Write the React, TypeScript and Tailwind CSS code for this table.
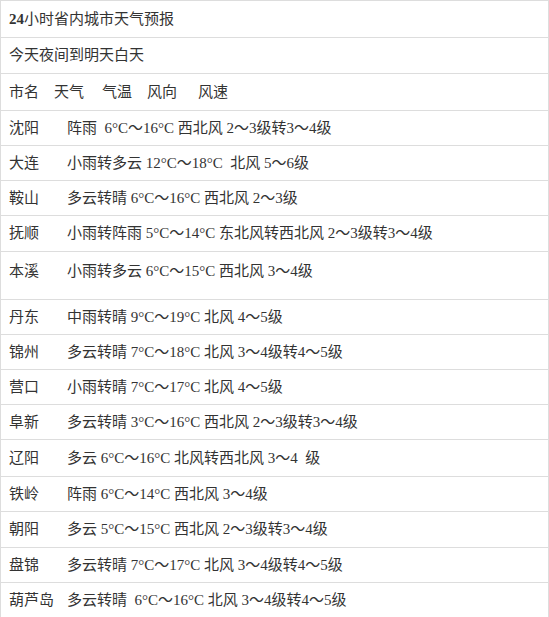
const rows: [string, string, string][] = [
  ['沈阳', '阵雨  6°C～16°C 西北风 2～3级转3～4级', 'h-[35px]'],
  ['大连', '小雨转多云 12°C～18°C  北风 5～6级', 'h-[35px]'],
  ['鞍山', '多云转晴 6°C～16°C 西北风 2～3级', 'h-[35px]'],
  ['抚顺', '小雨转阵雨 5°C～14°C 东北风转西北风 2～3级转3～4级', 'h-[36px]'],
  ['本溪', '小雨转多云 6°C～15°C 西北风 3～4级', 'h-[48px]'],
  ['丹东', '中雨转晴 9°C～19°C 北风 4～5级', 'h-[35px]'],
  ['锦州', '多云转晴 7°C～18°C 北风 3～4级转4～5级', 'h-[35px]'],
  ['营口', '小雨转晴 7°C～17°C 北风 4～5级', 'h-[35px]'],
  ['阜新', '多云转晴 3°C～16°C 西北风 2～3级转3～4级', 'h-[35px]'],
  ['辽阳', '多云 6°C～16°C 北风转西北风 3～4  级', 'h-[37px]'],
  ['铁岭', '阵雨 6°C～14°C 西北风 3～4级', 'h-[35px]'],
  ['朝阳', '多云 5°C～15°C 西北风 2～3级转3～4级', 'h-[36px]'],
  ['盘锦', '多云转晴 7°C～17°C 北风 3～4级转4～5级', 'h-[35px]'],
  ['葫芦岛', '多云转晴  6°C～16°C 北风 3～4级转4～5级', 'h-[35px]'],
];

export default function App() {
  return (
    <div
      className="w-[549px] bg-white text-[15px] text-[#333] border border-[#ddd]"
      style={{ fontFamily: '"Liberation Serif", "Noto Sans CJK SC", serif' }}
    >
      <div className="h-[37px] flex items-center px-2 border-b border-[#ddd]">
        <span className="font-bold">24</span>小时省内城市天气预报
      </div>
      <div className="h-[36px] flex items-center px-2 border-b border-[#ddd]">今天夜间到明天白天</div>
      <div className="h-[37px] flex items-center px-2 border-b border-[#ddd]">
        <span>市名</span>
        <span className="ml-[15px]">天气</span>
        <span className="ml-[18px]">气温</span>
        <span className="ml-[15px]">风向</span>
        <span className="ml-[21px]">风速</span>
      </div>
      {rows.map(([city, text, h]) => (
        <div
          key={city}
          className={`flex border-b border-[#ddd] last:border-b-0 ${h} ${city === '本溪' ? 'items-start pt-[8px]' : 'items-center'}`}
        >
          <div className="w-[58px] pl-2 whitespace-nowrap">{city}</div>
          <div className="pl-2 whitespace-pre">{text}</div>
        </div>
      ))}
    </div>
  );
}
